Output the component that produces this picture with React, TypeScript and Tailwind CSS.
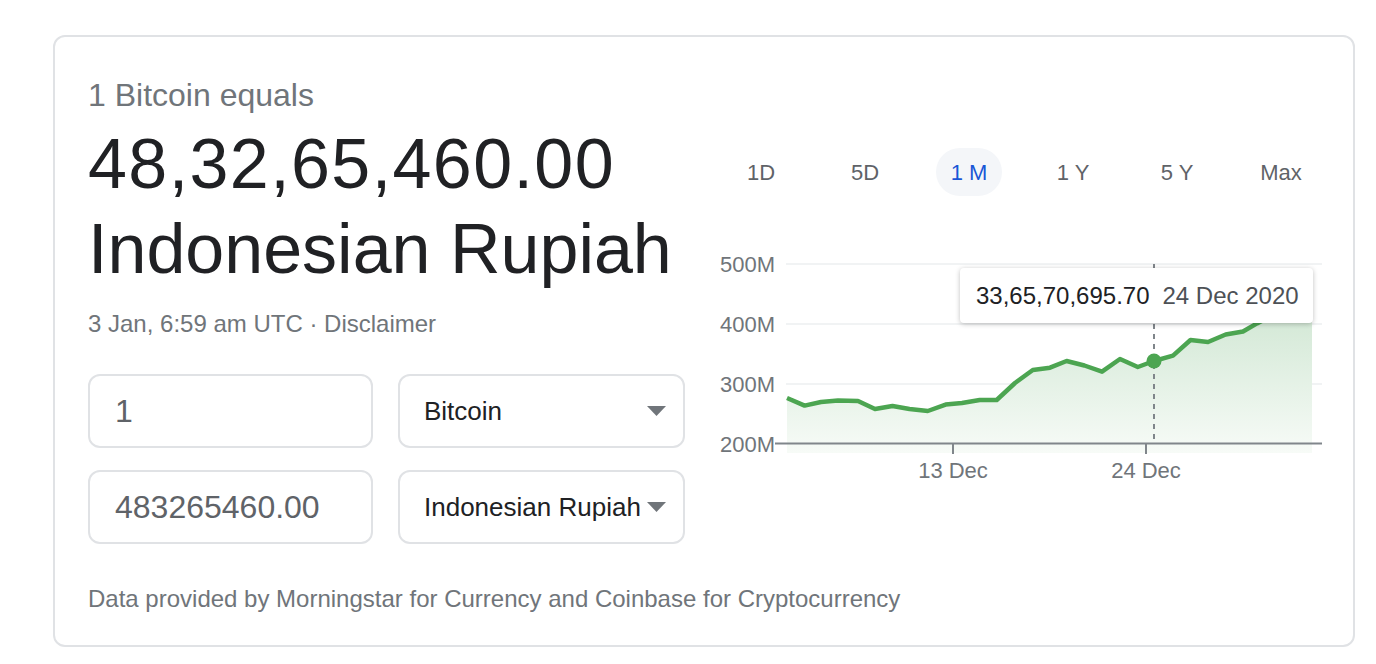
import React from "react";

const tabs = ["1D", "5D", "1 M", "1 Y", "5 Y", "Max"];

// chart points, local coords (origin at chart left/top)
const pts: [number, number][] = [
  [77, 148], [94.6, 155.6], [111, 152], [128, 150.6], [148, 151], [165, 159],
  [182.5, 156], [199.5, 159], [217.8, 161], [235.6, 154.6], [252, 153],
  [269.7, 150], [286.7, 150], [305, 133], [322.8, 120], [340, 117.7],
  [356.6, 111], [374.4, 115.5], [392, 121.7], [410, 109], [427.8, 117],
  [444, 111], [463, 105.6], [480.5, 90], [498, 92], [515.7, 84.5],
  [533, 81.5], [547, 73.4], [565, 64], [583, 58], [602, 50],
];

function Chart() {
  const line = pts.map(([x, y], i) => `${i ? "L" : "M"}${x} ${y}`).join(" ");
  const area = `${line} L602 203 L77 203 Z`;
  return (
    <div className="relative h-[240px] w-[620px]">
      <svg width="620" height="240" viewBox="-1 0 620 240">
        <defs>
          <linearGradient id="fill" x1="0" y1="0" x2="0" y2="1">
            <stop offset="0" stopColor="#cfe6d2" />
            <stop offset="1" stopColor="#f7fbf7" />
          </linearGradient>
        </defs>
        {[14, 74, 134].map((y) => (
          <line key={y} x1="76" x2="612" y1={y} y2={y} stroke="#f1f3f4" strokeWidth="2" />
        ))}
        <path d={area} fill="url(#fill)" />
        <line x1="444" x2="444" y1="14" y2="193" stroke="#80868b" strokeWidth="2" strokeDasharray="5 5" />
        <path d={line} fill="none" stroke="#4ca551" strokeWidth="4.5" strokeLinejoin="round" />
        <circle cx="444" cy="111" r="7.5" fill="#4ca551" />
        <line x1="65" x2="612" y1="193.5" y2="193.5" stroke="#80868b" strokeWidth="2" />
        <line x1="243" x2="243" y1="194" y2="204" stroke="#80868b" strokeWidth="2" />
        <line x1="436" x2="436" y1="194" y2="204" stroke="#80868b" strokeWidth="2" />
        <g fill="#70757a" fontSize="22" fontFamily="'Liberation Sans', Arial, sans-serif">
          <text x="65" y="22" textAnchor="end">500M</text>
          <text x="65" y="82" textAnchor="end">400M</text>
          <text x="65" y="142" textAnchor="end">300M</text>
          <text x="65" y="202" textAnchor="end">200M</text>
          <text x="243" y="228" textAnchor="middle">13 Dec</text>
          <text x="436" y="228" textAnchor="middle">24 Dec</text>
        </g>
      </svg>
      <div className="absolute left-[251px] top-[18px] flex h-[55px] w-[353px] items-center gap-[13px] rounded-[4px] bg-white pl-[16px] text-[24px] shadow-[0_1px_5px_rgba(0,0,0,0.25)]">
        <span className="text-[#202124]">33,65,70,695.70</span>
        <span className="text-[#4d5156]">24 Dec 2020</span>
      </div>
    </div>
  );
}

function Caret() {
  return (
    <svg width="19" height="10" viewBox="0 0 19 10" className="shrink-0">
      <path d="M0 0 H19 L9.5 10 Z" fill="#70757a" />
    </svg>
  );
}

export default function App() {
  return (
    <div className="min-h-screen bg-white pl-[53px] pt-[35px] font-['Liberation_Sans',Arial,sans-serif]">
      <div className="h-[612px] w-[1302px] rounded-[12px] border-2 border-[#e0e2e5] pl-[33px] pt-[40px]">
        <div className="flex gap-[24px]">
          {/* left: conversion */}
          <div className="w-[597px]">
            <p className="text-[32px] leading-[36px] text-[#70757a]">1 Bitcoin equals</p>
            <div className="mt-[9px] text-[70px] leading-[85px] text-[#202124]">
              <div className="tracking-[1.4px]">48,32,65,460.00</div>
              <div>Indonesian Rupiah</div>
            </div>
            <p className="mt-[16px] text-[24px] leading-[32px] text-[#70757a]">
              3 Jan, 6:59 am UTC · Disclaimer
            </p>
            <div className="mt-[34px] grid grid-cols-[285px_287px] gap-x-[25px] gap-y-[22px]">
              <div className="flex h-[74px] items-center rounded-[12px] border-2 border-[#e0e2e5] pl-[25px] text-[32px] text-[#5f6368]">
                1
              </div>
              <div className="flex h-[74px] items-center justify-between rounded-[12px] border-2 border-[#e0e2e5] pl-[24px] pr-[17px] text-[26px] text-[#202124]">
                <span>Bitcoin</span>
                <Caret />
              </div>
              <div className="flex h-[74px] items-center rounded-[12px] border-2 border-[#e0e2e5] pl-[25px] text-[32px] text-[#5f6368]">
                483265460.00
              </div>
              <div className="flex h-[74px] items-center justify-between rounded-[12px] border-2 border-[#e0e2e5] pl-[24px] pr-[17px] text-[26px] text-[#202124]">
                <span>Indonesian Rupiah</span>
                <Caret />
              </div>
            </div>
          </div>

          {/* right: range tabs + chart */}
          <div className="mt-[71px]">
            <div className="flex w-[624px]">
              {tabs.map((t) => (
                <div key={t} className="flex w-[104px] justify-center">
                  <span
                    className={
                      t === "1 M"
                        ? "flex h-[48px] w-[66px] items-center justify-center rounded-full bg-[#f4f6f9] text-[22px] text-[#1a56d6]"
                        : "flex h-[48px] items-center text-[22px] text-[#5f6368]"
                    }
                  >
                    {t}
                  </span>
                </div>
              ))}
            </div>
            <div className="mt-[54px]">
              <Chart />
            </div>
          </div>
        </div>
        <p className="mt-[41px] text-[24px] leading-[28px] text-[#70757a]">
          Data provided by Morningstar for Currency and Coinbase for Cryptocurrency
        </p>
      </div>
    </div>
  );
}
